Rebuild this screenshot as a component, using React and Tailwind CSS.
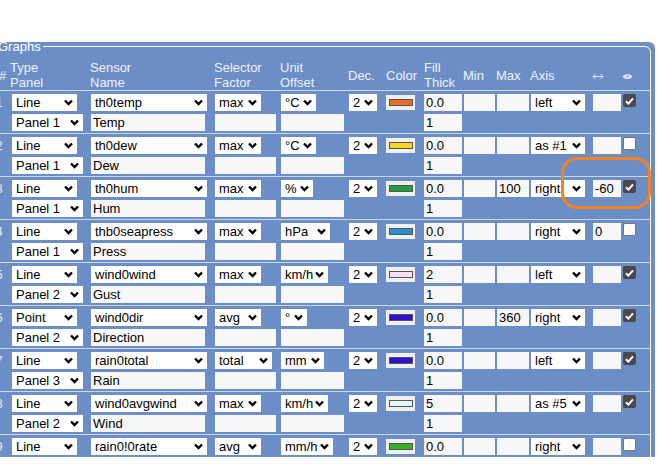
import React from 'react';

const COLS = 'grid grid-cols-[17px_79px_124px_66px_68px_37px_38px_40px_33px_34px_62px_29px_16px]';

const rows = [
  { n: 1, type: 'Line', sensor: 'th0temp', sel: 'max', sw: 46, unit: '°C', uw: 35, color: '#ee6a1e', fill: '0.0', max: '', axis: 'left', arrow: '', on: true, panel: 'Panel 1', name: 'Temp' },
  { n: 2, type: 'Line', sensor: 'th0dew', sel: 'max', sw: 46, unit: '°C', uw: 35, color: '#f8d51b', fill: '0.0', max: '', axis: 'as #1', arrow: '', on: false, panel: 'Panel 1', name: 'Dew' },
  { n: 3, type: 'Line', sensor: 'th0hum', sel: 'max', sw: 46, unit: '%', uw: 32, color: '#1f9e3c', fill: '0.0', max: '100', axis: 'right', arrow: '-60', on: true, panel: 'Panel 1', name: 'Hum' },
  { n: 4, type: 'Line', sensor: 'thb0seapress', sel: 'max', sw: 46, unit: 'hPa', uw: 49, color: '#2a8fd0', fill: '0.0', max: '', axis: 'right', arrow: '0', on: false, panel: 'Panel 1', name: 'Press' },
  { n: 5, type: 'Line', sensor: 'wind0wind', sel: 'max', sw: 46, unit: 'km/h', uw: 47, color: '#f6e2f4', fill: '2', max: '', axis: 'left', arrow: '', on: true, panel: 'Panel 2', name: 'Gust' },
  { n: 6, type: 'Point', sensor: 'wind0dir', sel: 'avg', sw: 46, unit: '°', uw: 26, color: '#2d12c8', fill: '0.0', max: '360', axis: 'right', arrow: '', on: true, panel: 'Panel 2', name: 'Direction' },
  { n: 7, type: 'Line', sensor: 'rain0total', sel: 'total', sw: 57, unit: 'mm', uw: 43, color: '#2d12c8', fill: '0.0', max: '', axis: 'left', arrow: '', on: true, panel: 'Panel 3', name: 'Rain' },
  { n: 8, type: 'Line', sensor: 'wind0avgwind', sel: 'max', sw: 46, unit: 'km/h', uw: 47, color: '#dff8fb', fill: '5', max: '', axis: 'as #5', arrow: '', on: true, panel: 'Panel 2', name: 'Wind' },
  { n: 9, type: 'Line', sensor: 'rain0!0rate', sel: 'avg', sw: 46, unit: 'mm/h', uw: 52, color: '#33b522', fill: '0.0', max: '', axis: 'right', arrow: '', on: false, panel: 'Panel 3', name: 'Rate' },
];

const Chev = () => (
  <svg width="9" height="7" viewBox="0 0 9 7" className="shrink-0">
    <path d="M1 1.5l3.5 3.5L8 1.5" fill="none" stroke="#000" strokeWidth="2.4" />
  </svg>
);

const Sel = ({ w, children }) => (
  <div style={{ width: w }} className="h-[17px] bg-white flex items-center justify-between pl-[4px] pr-[4px] text-[13px] leading-[17px] text-black whitespace-nowrap overflow-hidden">
    <span>{children}</span>
    <Chev />
  </div>
);

const Inp = ({ w, value }) => (
  <input
    readOnly
    value={value}
    style={{ width: w }}
    className="h-[17px] bg-[#f7f7f7] pl-[2px] text-[13px] leading-[17px] text-black outline-none"
  />
);

const Check = ({ on }) =>
  on ? (
    <div className="w-[13px] h-[13px] ml-[1px] rounded-[2px] bg-[#4a4a4a] flex items-center justify-center">
      <svg width="9" height="8" viewBox="0 0 9 8">
        <path d="M1 4.2l2.4 2.4L8 1.4" stroke="#fff" strokeWidth="2" fill="none" />
      </svg>
    </div>
  ) : (
    <div className="w-[13px] h-[13px] ml-[1px] rounded-[2px] bg-white border border-[#767676]" />
  );

const Row = ({ r }) => (
  <div className="border-b border-[#c9d6ee] pt-[3px] pb-[2px] flex flex-col gap-[3px]">
    <div className={COLS}>
      <div className="pl-[0.5px] text-[13px] leading-[17px] text-[#e4eaf6]">{r.n}</div>
      <Sel w={65}>{r.type}</Sel>
      <Sel w={116}>{r.sensor}</Sel>
      <Sel w={r.sw}>{r.sel}</Sel>
      <Sel w={r.uw}>{r.unit}</Sel>
      <Sel w={28}>2</Sel>
      <div className="w-[29px] h-[15px] mt-[1px] bg-[#efefef] flex items-center justify-center">
        <div className="w-[24px] h-[7px] border border-[#555]" style={{ background: r.color }} />
      </div>
      <Inp w={38} value={r.fill} />
      <Inp w={31} value="" />
      <Inp w={32} value={r.max} />
      <Sel w={54}>{r.axis}</Sel>
      <Inp w={28} value={r.arrow} />
      <Check on={r.on} />
    </div>
    <div className={COLS}>
      <div />
      <Sel w={71}>{r.panel}</Sel>
      <Inp w={114} value={r.name} />
      <Inp w={61} value="" />
      <Inp w={63} value="" />
      <div />
      <div />
      <Inp w={38} value="1" />
    </div>
  </div>
);

const Eye = () => (
  <svg width="11" height="7" viewBox="0 0 11 7">
    <path d="M0.5 3.5C3 0 8 0 10.5 3.5C8 7 3 7 0.5 3.5Z" fill="#e3e8f3" />
    <circle cx="5.5" cy="3.5" r="1.8" fill="#b4c1db" />
  </svg>
);

const Arrows = () => (
  <svg width="12" height="7" viewBox="0 0 12 7">
    <path d="M1 3.5h10M3.5 1L1 3.5 3.5 6M8.5 1L11 3.5 8.5 6" fill="none" stroke="#e3e8f3" strokeWidth="1" />
  </svg>
);

export default function App() {
  return (
    <div className="w-[657px] h-[465px] bg-white overflow-hidden relative font-['Liberation_Sans',Arial,sans-serif]">
      <div className="mt-[42px] h-[415px] w-[655px] bg-[#6b8ec7] rounded-tr-[6px] overflow-hidden">
        <fieldset className="ml-[-7px] mt-[-3px] w-[658px] border border-white rounded-tr-[6px]">
          <legend className="pl-[4px] pr-[2px] text-[13px] leading-[15px] text-white">Graphs</legend>

          <div className={`${COLS} ml-[1px] pt-[6px] border-b border-[#c9d6ee] text-[13px] leading-[15px] text-[#eef2fa]`}>
            <div className="self-center pl-[4px]">#</div>
            <div className="ml-[-2px]">Type<br />Panel</div>
            <div className="ml-[-1px]">Sensor<br />Name</div>
            <div className="ml-[-1px]">Selector<br />Factor</div>
            <div className="ml-[-1px]">Unit<br />Offset</div>
            <div className="ml-[-1px] self-center">Dec.</div>
            <div className="self-center">Color</div>
            <div>Fill<br />Thick</div>
            <div className="ml-[-1px] self-center">Min</div>
            <div className="ml-[-1px] self-center">Max</div>
            <div className="ml-[-1px] self-center">Axis</div>
            <div className="ml-[-1px] self-center pt-[2px]"><Arrows /></div>
            <div className="self-center pt-[2px]"><Eye /></div>
          </div>

          <div className="ml-[1px]">
            {rows.map((r) => (
              <Row key={r.n} r={r} />
            ))}
          </div>
        </fieldset>
      </div>

      <div className="absolute left-[561px] top-[157px] w-[90px] h-[52px] border-[3px] border-[#f5821f] rounded-[16px]" />
    </div>
  );
}
